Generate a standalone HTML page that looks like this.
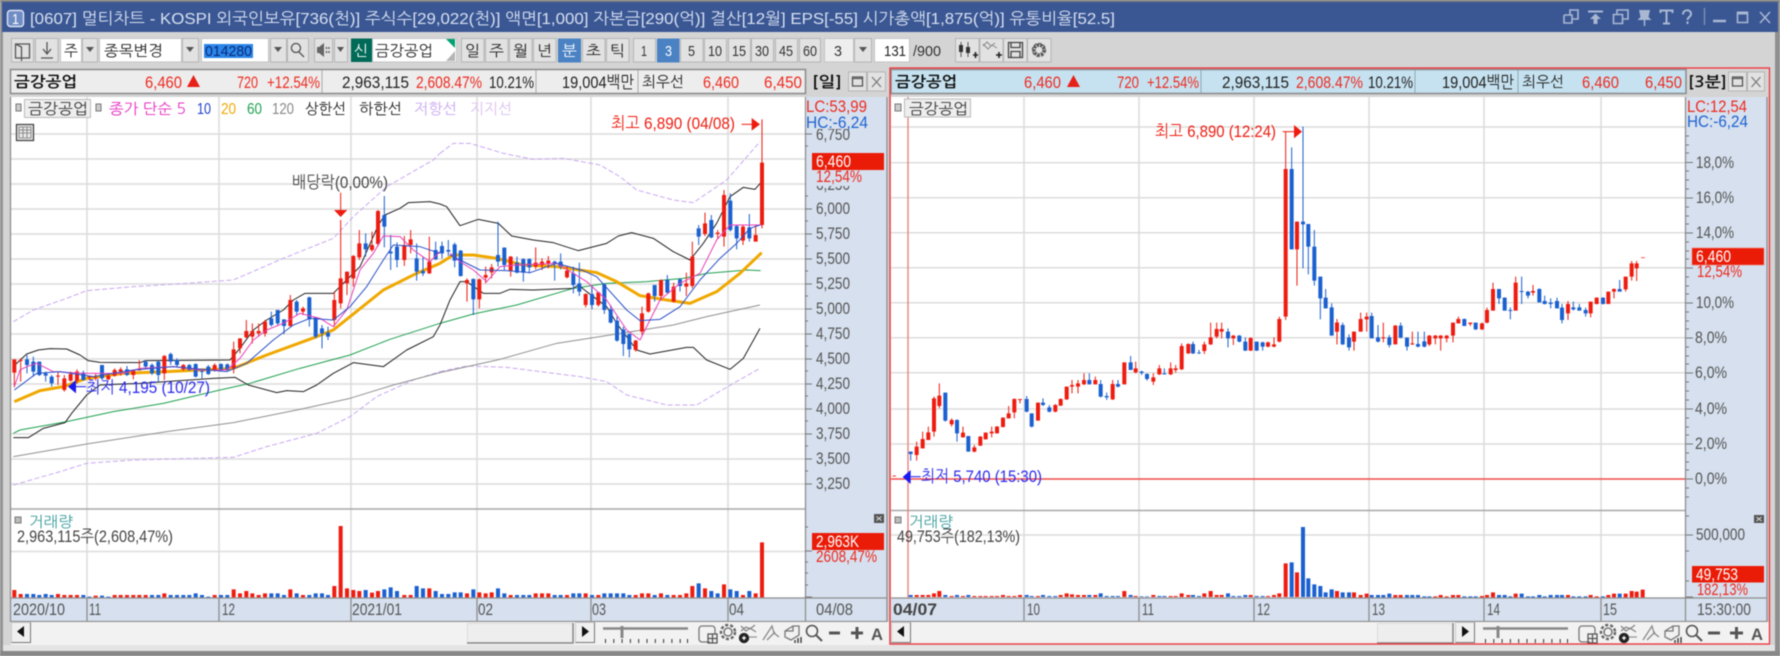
<!DOCTYPE html>
<html lang="ko"><head><meta charset="utf-8"><title>멀티차트</title>
<style>
html,body{margin:0;padding:0;width:1780px;height:656px;overflow:hidden;background:#d4d4d4}
svg{display:block;filter:blur(.45px)}
text{font-family:"Liberation Sans","NanumGothic","Noto Sans CJK KR",sans-serif;font-size:17px;fill:#333}
.k{font-family:"NanumGothic","Noto Sans CJK KR",sans-serif}
.b{font-weight:bold;fill:#111}
.r{fill:#ee2a20}.u{fill:#1e62d0}.w{fill:#fff}.a{fill:#555}
.wr,.wb,.br,.bb{fill:none}
.wr{stroke:#ee1c10;stroke-width:3}.wb{stroke:#1a60d0;stroke-width:3}
.br{stroke:#ee1c10;stroke-width:12}.bb{stroke:#1a60d0;stroke-width:12}
.g{stroke:#dcdcdc;stroke-width:1.5;fill:none}
.ln{fill:none;stroke-linejoin:round}
.btn{fill:#e2e2e2;stroke:#b5b5b5}
.ic{fill:none;stroke:#555;stroke-width:1.3}
.ti{fill:none;stroke:#a9b7d3;stroke-width:2}
</style></head><body>
<svg width="1780" height="656" viewBox="0 0 1780 656" xmlns="http://www.w3.org/2000/svg">
<!-- frame -->
<rect width="1780" height="656" fill="#d4d4d4"/>
<rect x="0" y="0" width="3" height="656" fill="#959595"/>
<rect x="1775" y="0" width="5" height="656" fill="#8f8f8f"/>
<rect x="0" y="0" width="1780" height="2" fill="#7d7d7d"/>
<rect x="2" y="2" width="1776" height="30" fill="#3a5794"/>
<rect x="3" y="645" width="1772" height="6" fill="#e4e4e4"/>
<rect x="0" y="651" width="1780" height="5" fill="#888"/>
<!-- title -->
<rect x="7.500" y="10.500" width="16" height="16" rx="3" fill="#6f8cc4" stroke="#dfe6f4" stroke-width="1.400"/>
<text x="12" y="24" textLength="7" lengthAdjust="spacingAndGlyphs" class="w" style="font-size:15px">1</text>
<text x="30" y="24" textLength="1085" lengthAdjust="spacingAndGlyphs" style="fill:#d8e0f0;font-size:16px">[0607] 멀티차트 - KOSPI 외국인보유[736(천)] 주식수[29,022(천)] 액면[1,000] 자본금[290(억)] 결산[12월] EPS[-55] 시가총액[1,875(억)] 유통비율[52.5]</text>
<g class="ti">
<path d="M1564 15h6v-5h8v9h-6M1564 15v8h8v-8h-8" stroke-width="1.600"/>
<path d="M1588 11.500h15" stroke-width="2"/><path d="M1590 19l5.500-5.500 5.500 5.500h-3.500v5h-4v-5z" fill="#a9b7d3" stroke="none"/>
<path d="M1617 15v-5h11v9h-5M1613.500 14.500h9v9h-9z" stroke-width="1.600"/>
<path d="M1639 10h11l-1.500 7 3 3h-14l3-3z" fill="#a9b7d3" stroke="none"/><path d="M1644.500 20v6" stroke-width="1.500"/>
<path d="M1660.500 13v-2.500h12v2.500M1666.500 10.500v13M1663 23.500h7"/>
<path d="M1683 14.500c0-5.500 8-5.500 8-.5 0 3-3.500 3-3.500 6M1687.500 21.500v2.500"/>
<path d="M1704.500 8v17" stroke="#8294b8" stroke-width="1.300"/>
<path d="M1713 21h13" stroke-width="2.500"/>
<path d="M1737.500 12.500h10v10h-10z" stroke-width="1.600"/><path d="M1737 13h11" stroke-width="3"/>
<path d="M1760 12l10 11M1770 12l-10 11" stroke-width="1.500"/>
</g>
<!-- toolbar -->
<g>
<rect class="btn" x="11.500" y="38.500" width="22" height="23.500"/>
<path class="ic" d="M15.500 44h14v14h-14zM15.500 44l6 3v14M15.500 58h6"/>
<rect class="btn" x="35.500" y="38.500" width="22.500" height="23.500"/>
<path class="ic" d="M47 42v11M43 49l4 5 4-5M41 58h12" stroke-width="1.600"/>
<rect x="60.500" y="38.500" width="21" height="23.500" fill="#fff" stroke="#c4c4c4"/>
<text x="64" y="56" textLength="14" lengthAdjust="spacingAndGlyphs" class="k" style="font-size:15px;fill:#222">주</text>
<rect class="btn" x="82.500" y="38.500" width="15" height="23.500"/><path d="M86 47h8l-4 5z" fill="#555"/>
<rect x="99.500" y="38.500" width="82" height="23.500" fill="#fff" stroke="#c4c4c4"/>
<text x="104" y="56" textLength="59" lengthAdjust="spacingAndGlyphs" class="k" style="font-size:15px;fill:#222">종목변경</text>
<rect class="btn" x="182.500" y="38.500" width="16" height="23.500"/><path d="M186 47h8l-4 5z" fill="#555"/>
<rect x="201.500" y="38.500" width="67" height="23.500" fill="#fff" stroke="#c4c4c4"/>
<rect x="204" y="44" width="49" height="14" fill="#2a86e8"/>
<text x="205" y="56" textLength="47" lengthAdjust="spacingAndGlyphs" style="font-size:15px;fill:#0a2a7a">014280</text>
<rect class="btn" x="270.500" y="38.500" width="16" height="23.500"/><path d="M274 47h8l-4 5z" fill="#555"/>
<rect class="btn" x="287.500" y="38.500" width="21" height="23.500"/>
<path class="ic" d="M296 43.500a4.500 4.500 0 1 1-.1 0zM299 52l5 5" stroke-width="1.600" stroke="#888"/>
<rect class="btn" x="314.500" y="38.500" width="18" height="23.500"/>
<path d="M317 47h2l5-4v14l-5-4h-2z" fill="#666"/><path class="ic" d="M326.500 47v2M326.500 51v2M329 47v2M329 51v2" stroke="#888"/>
<rect class="btn" x="334.500" y="38.500" width="13" height="23.500"/><path d="M337 47h7l-3.500 5z" fill="#555"/>
<rect x="351" y="38.500" width="21" height="23.500" fill="#006a58"/>
<text x="354" y="56" textLength="14" lengthAdjust="spacingAndGlyphs" class="k" style="font-size:15px;fill:#fff">신</text>
<rect x="372.500" y="38.500" width="84" height="23.500" fill="#fff" stroke="#c4c4c4"/>
<text x="375" y="56" textLength="58" lengthAdjust="spacingAndGlyphs" class="k" style="font-size:15px;fill:#222">금강공업</text>
<path d="M446 39h9v9z" fill="#00a070"/><path d="M455 51v10h-9z" fill="#b5b5b5"/>
</g>
<g>
<rect class="btn" x="461.500" y="38.500" width="22.500" height="23.500"/><rect class="btn" x="485.500" y="38.500" width="22.500" height="23.500"/>
<rect class="btn" x="509.500" y="38.500" width="22.500" height="23.500"/><rect class="btn" x="533.500" y="38.500" width="22.500" height="23.500"/>
<rect x="558" y="38.500" width="23" height="24" fill="#4a82c4"/><rect class="btn" x="582.500" y="38.500" width="22.500" height="23.500"/>
<rect class="btn" x="606.500" y="38.500" width="22.500" height="23.500"/>
<rect class="btn" x="633.500" y="38.500" width="22" height="23.500"/><rect x="657" y="38.500" width="22.500" height="24" fill="#4a82c4"/>
<rect class="btn" x="680.500" y="38.500" width="22.500" height="23.500"/><rect class="btn" x="704.500" y="38.500" width="22" height="23.500"/>
<rect class="btn" x="728.500" y="38.500" width="22" height="23.500"/><rect class="btn" x="751.500" y="38.500" width="22" height="23.500"/>
<rect class="btn" x="775.500" y="38.500" width="22" height="23.500"/><rect class="btn" x="799.500" y="38.500" width="21" height="23.500"/>
<text x="465" y="56" textLength="15" lengthAdjust="spacingAndGlyphs" class="k" style="font-size:15px;fill:#222">일</text>
<text x="489" y="56" textLength="15" lengthAdjust="spacingAndGlyphs" class="k" style="font-size:15px;fill:#222">주</text>
<text x="513" y="56" textLength="15" lengthAdjust="spacingAndGlyphs" class="k" style="font-size:15px;fill:#222">월</text>
<text x="537" y="56" textLength="15" lengthAdjust="spacingAndGlyphs" class="k" style="font-size:15px;fill:#222">년</text>
<text x="562" y="56" textLength="15" lengthAdjust="spacingAndGlyphs" class="k" style="font-size:15px;fill:#fff">분</text>
<text x="586" y="56" textLength="15" lengthAdjust="spacingAndGlyphs" class="k" style="font-size:15px;fill:#222">초</text>
<text x="610" y="56" textLength="15" lengthAdjust="spacingAndGlyphs" class="k" style="font-size:15px;fill:#222">틱</text>
<text x="641" y="56" textLength="6" lengthAdjust="spacingAndGlyphs" style="font-size:15px">1</text>
<text x="665" y="56" textLength="7" lengthAdjust="spacingAndGlyphs" class="w" style="font-size:15px">3</text>
<text x="688" y="56" textLength="7" lengthAdjust="spacingAndGlyphs" style="font-size:15px">5</text>
<text x="708" y="56" textLength="14" lengthAdjust="spacingAndGlyphs" style="font-size:15px">10</text>
<text x="732" y="56" textLength="14" lengthAdjust="spacingAndGlyphs" style="font-size:15px">15</text>
<text x="755" y="56" textLength="14" lengthAdjust="spacingAndGlyphs" style="font-size:15px">30</text>
<text x="779" y="56" textLength="14" lengthAdjust="spacingAndGlyphs" style="font-size:15px">45</text>
<text x="803" y="56" textLength="14" lengthAdjust="spacingAndGlyphs" style="font-size:15px">60</text>
<rect x="824.500" y="38.500" width="29" height="23.500" fill="#eee" stroke="#c4c4c4"/>
<text x="834" y="56" textLength="8" lengthAdjust="spacingAndGlyphs" style="font-size:15px">3</text>
<rect class="btn" x="854.500" y="38.500" width="17" height="23.500"/><path d="M859 47h8l-4 5z" fill="#555"/>
<rect x="874.500" y="38.500" width="35" height="23.500" fill="#fff" stroke="#c4c4c4"/>
<text x="884" y="56" textLength="22" lengthAdjust="spacingAndGlyphs" style="font-size:15px;fill:#222">131</text>
<text x="913" y="56" textLength="28" lengthAdjust="spacingAndGlyphs" style="font-size:15px">/900</text>
<rect class="btn" x="955.500" y="38.500" width="23.500" height="23.500"/>
<path d="M961 42v15M968 42v15" stroke="#555" fill="none"/><path d="M959 45h4v7h-4zM966 47h4v6h-4z" fill="#333"/><path d="M973 55h5M975.500 52v6" stroke="#222" stroke-width="1.600"/>
<rect class="btn" x="980" y="38.500" width="23" height="23.500"/>
<path d="M983 46l4-4 4 4 4-3M983 44l5 5 4-4 5 3" fill="none" stroke="#888"/><path d="M996 55h6M999 52v6" stroke="#222" stroke-width="1.600"/>
<rect class="btn" x="1003.500" y="38.500" width="23.500" height="23.500"/>
<path d="M1008.500 42.500h14v15h-14zM1011 42.500v5h9v-5M1011 57.500v-6h9v6" fill="none" stroke="#444" stroke-width="1.300"/>
<rect class="btn" x="1027.500" y="38.500" width="23.500" height="23.500"/>
<circle cx="1039" cy="50" r="5" fill="none" stroke="#555" stroke-width="3.500" stroke-dasharray="2.500 1"/><circle cx="1039" cy="50" r="6.500" fill="none" stroke="#666" stroke-width="1.500" stroke-dasharray="3 2"/>
</g>
<!-- left header -->
<rect x="10.500" y="69.500" width="795" height="24" fill="#ededed" stroke="#8a8a8a" stroke-width="1.500"/>
<path d="M322 70v23M536 70v23M638 70v23" stroke="#a8a8a8"/>
<text x="14" y="87" textLength="63" lengthAdjust="spacingAndGlyphs" class="k b" style="font-size:15px">금강공업</text>
<text x="145" y="88" textLength="37" lengthAdjust="spacingAndGlyphs" class="r">6,460</text><path d="M187 87l6.500-12 6.500 12z" fill="#e8201a"/>
<text x="237" y="88" textLength="21" lengthAdjust="spacingAndGlyphs" class="r">720</text>
<text x="267" y="88" textLength="53" lengthAdjust="spacingAndGlyphs" class="r">+12.54%</text>
<text x="342" y="88" textLength="67" lengthAdjust="spacingAndGlyphs" style="fill:#222">2,963,115</text>
<text x="416" y="88" textLength="66" lengthAdjust="spacingAndGlyphs" class="r">2,608.47%</text>
<text x="489" y="88" textLength="45" lengthAdjust="spacingAndGlyphs" style="fill:#222">10.21%</text>
<text x="562" y="88" textLength="72" lengthAdjust="spacingAndGlyphs" style="fill:#222">19,004백만</text>
<text x="642" y="87" textLength="42" lengthAdjust="spacingAndGlyphs" class="k" style="font-size:15px;fill:#222">최우선</text>
<text x="703" y="88" textLength="36" lengthAdjust="spacingAndGlyphs" class="r">6,460</text>
<text x="764" y="88" textLength="38" lengthAdjust="spacingAndGlyphs" class="r">6,450</text>
<text x="812" y="87" textLength="30" lengthAdjust="spacingAndGlyphs" class="k b" style="font-size:15px">[일]</text>
<rect class="btn" x="848.500" y="72" width="18" height="19"/><rect class="btn" x="867.500" y="72" width="18" height="19"/>
<path d="M852.500 77h10v9h-10zM852.500 78.500h10" fill="none" stroke="#555" stroke-width="1.300"/>
<path d="M872 77l9 10M881 77l-9 10" stroke="#777" stroke-width="1.200"/>
<!-- right header -->
<rect x="891" y="69.500" width="795" height="24" fill="#c6e2f0" stroke="#8a8a8a" stroke-width="1.500"/>
<path d="M1201 70v23M1415 70v23M1518 70v23" stroke="#8ea8b5"/>
<text x="895" y="87" textLength="62" lengthAdjust="spacingAndGlyphs" class="k b" style="font-size:15px">금강공업</text>
<text x="1024" y="88" textLength="37" lengthAdjust="spacingAndGlyphs" class="r">6,460</text><path d="M1067 87l6.500-12 6.500 12z" fill="#e8201a"/>
<text x="1117" y="88" textLength="22" lengthAdjust="spacingAndGlyphs" class="r">720</text>
<text x="1147" y="88" textLength="52" lengthAdjust="spacingAndGlyphs" class="r">+12.54%</text>
<text x="1222" y="88" textLength="67" lengthAdjust="spacingAndGlyphs" style="fill:#222">2,963,115</text>
<text x="1296" y="88" textLength="67" lengthAdjust="spacingAndGlyphs" class="r">2,608.47%</text>
<text x="1368" y="88" textLength="45" lengthAdjust="spacingAndGlyphs" style="fill:#222">10.21%</text>
<text x="1442" y="88" textLength="72" lengthAdjust="spacingAndGlyphs" style="fill:#222">19,004백만</text>
<text x="1522" y="87" textLength="42" lengthAdjust="spacingAndGlyphs" class="k" style="font-size:15px;fill:#222">최우선</text>
<text x="1582" y="88" textLength="37" lengthAdjust="spacingAndGlyphs" class="r">6,460</text>
<text x="1645" y="88" textLength="37" lengthAdjust="spacingAndGlyphs" class="r">6,450</text>
<text x="1688" y="87" textLength="39" lengthAdjust="spacingAndGlyphs" class="k b" style="font-size:15px">[3분]</text>
<rect class="btn" x="1728.500" y="72" width="18" height="19"/><rect class="btn" x="1747.500" y="72" width="17" height="19"/>
<path d="M1732.500 77h10v9h-10zM1732.500 78.500h10" fill="none" stroke="#555" stroke-width="1.300"/>
<path d="M1751.500 77l9 10M1760.500 77l-9 10" stroke="#777" stroke-width="1.200"/>

<!-- LEFT chart -->
<rect x="11" y="97" width="794" height="501" fill="#fff"/>
<rect x="805" y="97" width="82" height="525" fill="#d6e0ee"/>
<rect x="11" y="598" width="794" height="24" fill="#d6e0ee"/>
<path class="g" d="M11 134H805M11 159H805M11 184H805M11 209H805M11 234H805M11 259H805M11 284H805M11 309H805M11 334H805M11 359H805M11 384H805M11 409H805M11 434H805M11 459H805M11 484H805M11 551.500H805M87 97V598M219 97V598M351 97V598M477 97V598M591 97V598M728 97V598"/>
<path d="M11 509H805" stroke="#a8a8a8" stroke-width="1.500"/>
<path d="M10.500 97V622M805.500 97V622M887 97V622M11 598H887M11 621.500H887M87 598V621M219 598V621M351 598V621M477 598V621M591 598V621M728 598V621" stroke="#8e8e8e" stroke-width="1.300" fill="none"/>
<path d="M805 134h7M805 209h7M805 234h7M805 259h7M805 284h7M805 309h7M805 334h7M805 359h7M805 384h7M805 409h7M805 434h7M805 459h7M805 484h7M805 146h3M805 196h3M805 221h3M805 246h3M805 271h3M805 296h3M805 321h3M805 346h3M805 371h3M805 396h3M805 421h3M805 446h3M805 471h3M805 527h3M805 551h7M805 562h3M805 573h3M805 585h3M805 597h7" stroke="#777" fill="none"/>
<g transform="translate(0,110) scale(.33333)">
<polyline class="ln" stroke="#c9a8f2" stroke-width="3" stroke-dasharray="15 7" points="40,635 100,600 200,565 260,542 400,530 560,520 700,510 850,445 1000,385 1060,320 1160,230 1300,150 1320,130"/>
<polyline class="ln" stroke="#c9a8f2" stroke-width="3" stroke-dasharray="15 7" points="40,1125 180,1085 260,1060 400,1050 700,1042 800,1010 950,970 1050,920 1130,860 1240,810 1320,785"/>
<polyline class="ln" stroke="#909090" stroke-width="3" points="40,1040 260,1002 500,965 700,938 900,898 1050,865 1180,825 1320,788"/>
<polyline class="ln" stroke="#1fa050" stroke-width="3" points="40,970 60,960 200,935 340,905 490,880 660,840 750,820 900,775 1050,735 1170,688 1320,640"/>
<polyline class="ln" stroke="#222" stroke-width="3" points="40,983 85,983 130,955 195,938 215,910 260,855 300,825 420,820 640,805 705,802 745,825 830,848 860,842 910,845 950,825 1000,790 1060,758 1150,770 1220,720 1300,680 1320,645"/>
<polyline class="ln" stroke="#222" stroke-width="3" points="45,765 80,732 115,720 150,716 200,717 240,735 265,752 300,757 420,758 435,752 690,750 720,715 760,660 800,630 850,600 880,570 915,550 1000,550 1020,530 1080,470 1135,345 1155,315 1200,295 1225,278 1290,275 1320,282"/>
<polyline class="ln" stroke="#f0a800" stroke-width="9" points="43,875 120,842 190,830 260,805 370,790 500,785 700,775 800,735 950,680 1000,660 1050,620 1150,540 1250,490 1320,460"/>
<path class="wr" d="M43 748V832M62 745V815M174 785V825M193 795V845M212 785V815M231 778V820M268 797V810M287 792V812M325 790V810M344 775V800M362 772V797M400 780V808M418 750V782M493 735V810M550 762V782M644 760V785M701 695V790M720 685V730M739 630V685M757 640V700M776 640V680M795 630V680M871 555V650M909 590V615M1003 545V650M1022 330V595M1041 485V555M1060 435V530M1078 360V450M1116 365V425M1134 300V410M1213 378V468M1232 360V430M1288 380V492"/>
<path class="br" d="M43 748V788M62 750V753M174 797V800M193 805V840M212 792V812M231 785V812M268 800V803M287 802V805M325 797V808M344 780V797M362 778V785M400 782V795M418 778V781M493 738V790M550 765V778M644 765V780M701 718V775M720 685V715M739 663V682M757 663V680M776 663V670M795 635V670M871 570V648M909 595V605M1003 570V630M1022 505V580M1041 485V520M1060 438V505M1078 400V442M1116 405V420M1134 303V402M1213 405V450M1232 388V405M1288 455V490"/>
<path class="wb" d="M81 735V790M100 740V800M118 755V798M137 785V815M155 795V830M250 782V812M306 765V810M381 768V798M437 750V778M456 760V795M475 752V815M512 728V765M531 745V770M568 762V782M587 760V802M606 782V805M625 765V795M663 760V785M682 760V783M814 605V650M833 600V645M852 628V672M890 570V615M928 560V650M947 622V685M966 645V715M984 650V690M1097 370V440M1153 258V412M1172 375V480M1191 397V472M1250 400V512M1269 440V498M1307 395V450"/>
<path class="bb" d="M81 748V765M100 755V785M118 755V795M137 790V797M155 800V820M250 788V810M306 765V805M381 778V795M437 755V770M456 765V790M475 755V795M512 732V755M531 750V765M568 765V780M587 762V800M606 783V786M625 770V792M663 762V780M682 763V780M814 625V645M833 600V640M852 628V648M890 575V605M928 562V628M947 622V680M966 655V670M984 668V680M1097 400V418M1153 315V350M1172 425V430M1191 410V450M1250 445V485M1269 483V490M1307 420V448"/>
<polyline class="ln" stroke="#e83fb8" stroke-width="3" points="43,830 60,780 80,770 110,760 160,785 250,790 370,790 420,775 520,770 600,780 680,780 720,745 760,690 800,660 850,640 900,610 960,625 1000,650 1040,600 1080,480 1120,430 1150,378 1200,380 1240,420 1290,455 1320,425"/>
<polyline class="ln" stroke="#2a4fc8" stroke-width="3" points="43,840 110,790 180,785 280,800 400,780 520,770 680,785 740,760 820,690 880,645 930,625 1000,630 1050,590 1100,530 1150,450 1180,405 1260,410 1320,430"/>
<path d="M1022 248V305" stroke="#ee1c10" stroke-width="3"/><path d="M1002 300h40l-20 21z" fill="#ee1c10"/>
<path d="M258 830H228" stroke="#1a1af0" stroke-width="3"/><path d="M228 810v40l-24-20z" fill="#1a1af0"/>
</g>
<g transform="translate(440,110) scale(.33333)">
<polyline class="ln" stroke="#c9a8f2" stroke-width="3" stroke-dasharray="15 7" points="0,130 40,100 90,100 190,130 280,148 370,145 480,165 540,200 590,240 700,270 760,278 860,210 960,95"/>
<polyline class="ln" stroke="#c9a8f2" stroke-width="3" stroke-dasharray="15 7" points="0,785 80,768 200,772 420,800 500,815 560,855 680,885 770,885 880,820 960,775"/>
<polyline class="ln" stroke="#909090" stroke-width="3" points="0,788 180,748 350,700 530,672 700,645 800,620 960,585"/>
<polyline class="ln" stroke="#1fa050" stroke-width="3" points="0,640 100,612 230,585 400,535 500,520 620,515 730,505 800,490 920,480 962,482"/>
<polyline class="ln" stroke="#222" stroke-width="3" points="0,645 30,570 60,515 80,515 130,550 180,550 210,538 280,540 400,535 415,525 440,545 500,590 530,640 590,720 630,732 740,712 760,712 800,750 870,778 910,745 960,655"/>
<polyline class="ln" stroke="#222" stroke-width="3" points="0,282 20,290 60,347 115,328 175,340 215,378 280,390 340,398 415,422 500,400 535,378 575,368 640,385 700,425 750,450 790,400 830,340 870,260 910,232 945,238 965,215"/>
<polyline class="ln" stroke="#f0a800" stroke-width="9" points="0,460 40,435 100,435 170,445 250,465 350,470 470,488 530,515 600,557 680,570 750,580 830,545 900,490 965,428"/>
<path class="wr" d="M81 505V575M118 505V595M137 470V520M155 462V505M212 438V500M287 412V478M306 445V480M325 438V475M381 468V505M437 550V592M475 545V590M587 690V725M606 590V675M625 548V608M663 508V572M701 518V578M739 488V558M757 395V535M795 308V378M833 360V385M852 240V410M909 345V405M947 345V395M966 28V355"/>
<path class="br" d="M81 510V520M118 508V568M137 495V503M155 472V487M212 440V482M287 458V470M306 455V465M325 452V460M381 482V502M437 552V585M475 547V585M587 692V720M606 610V665M625 550V605M663 510V558M701 530V575M739 520V530M757 440V528M795 340V372M833 368V372M852 255V380M909 350V392M947 375V395M966 158V345"/>
<path class="wb" d="M6 395V445M25 390V438M44 398V472M62 420V500M100 505V615M174 335V470M193 412V480M231 440V490M250 445V515M268 445V490M344 452V512M362 430V478M400 470V550M418 458V558M456 525V598M493 520V612M512 585V640M531 620V695M550 650V738M568 670V742M644 525V575M682 495V550M720 505V545M776 345V405M814 315V385M871 250V365M890 345V418M928 312V395"/>
<path class="bb" d="M6 408V430M25 420V425M44 403V452M62 422V498M100 507V568M174 435V455M193 413V465M231 458V488M250 447V488M268 447V472M344 455V462M362 455V470M400 490V525M418 520V545M456 552V585M493 523V600M512 598V638M531 632V692M550 658V702M568 672V718M644 525V558M682 510V548M720 508V528M776 355V380M814 330V382M871 272V360M890 348V385M928 352V385"/>
<polyline class="ln" stroke="#e83fb8" stroke-width="3" points="30,430 60,455 100,480 140,515 180,470 230,465 350,460 400,490 440,515 500,570 560,660 600,690 660,570 720,520 780,490 830,390 870,345 930,345 965,345"/>
<polyline class="ln" stroke="#2a4fc8" stroke-width="3" points="30,435 90,465 120,480 200,482 270,488 350,460 430,482 470,500 560,600 600,632 660,628 720,590 780,510 840,445 890,400 930,355 960,345"/>
<path d="M905 43h32" stroke="#ee1c10" stroke-width="3"/><path d="M935 24l25 19-25 19z" fill="#ee1c10"/>
</g>
<g transform="translate(0,370) scale(.33333)">
<path class="br" d="M43 660V682M62 672V682M174 672V682M193 675V682M212 675V682M231 675V682M287 677V682M344 675V682M362 675V682M381 675V682M400 675V682M418 675V682M437 675V682M493 670V682M644 675V682M701 658V682M720 670V682M739 663V682M757 670V682M776 675V682M795 670V682M871 658V682M909 675V682M1003 648V682M1022 468V682M1041 655V682M1060 660V682M1078 663V682M1116 668V682M1134 663V682M1213 675V682M1232 675V682M1288 655V682"/>
<path class="bb" d="M81 672V682M100 672V682M118 675V682M137 672V682M155 675V682M250 675V682M268 680V682M306 677V682M325 680V682M456 675V682M475 675V682M512 675V682M531 675V682M550 675V682M568 675V682M587 670V682M606 675V682M625 680V682M663 675V682M682 675V682M814 670V682M833 670V682M852 675V682M890 670V682M928 675V682M947 670V682M966 670V682M984 675V682M1097 660V682M1153 658V682M1172 652V682M1191 663V682M1250 648V682M1269 655V682M1307 663V682"/>
</g>
<g transform="translate(440,490) scale(.33333)">
<path class="br" d="M81 310V322M118 307V322M137 310V322M155 307V322M212 315V322M287 310V322M306 310V322M325 310V322M381 315V322M437 310V322M475 315V322M587 315V322M606 310V322M625 310V322M663 310V322M701 315V322M720 315V322M739 310V322M757 288V322M795 295V322M852 283V322M909 315V322M947 310V322M966 157V322"/>
<path class="bb" d="M6 312V322M25 312V322M44 307V322M62 307V322M100 298V322M174 295V322M193 310V322M231 315V322M250 315V322M268 315V322M344 315V322M362 315V322M400 310V322M418 310V322M456 315V322M493 310V322M512 310V322M531 310V322M550 310V322M568 315V322M644 315V322M682 315V322M776 280V322M814 303V322M833 310V322M871 298V322M890 303V322M928 303V322"/>
</g>
<!-- left texts -->
<rect x="16" y="104" width="5" height="7" fill="#ccc" stroke="#777"/>
<rect x="24.500" y="99.500" width="66" height="18" fill="#eee" stroke="#bbb"/>
<text x="28" y="114" textLength="60" lengthAdjust="spacingAndGlyphs" class="k" style="font-size:15px;fill:#333">금강공업</text>
<rect x="96" y="104" width="5" height="7" fill="#ccc" stroke="#777"/>
<text x="109" y="114" textLength="77" lengthAdjust="spacingAndGlyphs" class="k" style="font-size:15px;fill:#e62cc0">종가 단순 5</text>
<text x="197" y="114" textLength="14" lengthAdjust="spacingAndGlyphs" style="font-size:16px;fill:#2040c8">10</text>
<text x="221" y="114" textLength="15" lengthAdjust="spacingAndGlyphs" style="font-size:16px;fill:#f0a800">20</text>
<text x="247" y="114" textLength="15" lengthAdjust="spacingAndGlyphs" style="font-size:16px;fill:#1fa050">60</text>
<text x="272" y="114" textLength="22" lengthAdjust="spacingAndGlyphs" style="font-size:16px;fill:#888">120</text>
<text x="305" y="114" textLength="41" lengthAdjust="spacingAndGlyphs" class="k" style="font-size:15px;fill:#222">상한선</text>
<text x="359" y="114" textLength="43" lengthAdjust="spacingAndGlyphs" class="k" style="font-size:15px;fill:#222">하한선</text>
<text x="414" y="114" textLength="43" lengthAdjust="spacingAndGlyphs" class="k" style="font-size:15px;fill:#c9a8f2">저항선</text>
<text x="470" y="114" textLength="42" lengthAdjust="spacingAndGlyphs" class="k" style="font-size:15px;fill:#dcc0f0">지지선</text>
<rect x="16.500" y="124.500" width="17" height="16" fill="#e8e8e8" stroke="#444" stroke-width="1.300"/>
<path d="M19 127h12v11h-12zM19 130h12M19 133h12M23 127v11M27 127v11" fill="none" stroke="#777" stroke-width=".8"/>
<text x="292" y="188" textLength="96" lengthAdjust="spacingAndGlyphs" style="fill:#444">배당락(0,00%)</text>
<text x="611" y="129" textLength="124" lengthAdjust="spacingAndGlyphs" style="fill:#ee1c10">최고 6,890 (04/08)</text>
<text x="86" y="393" textLength="124" lengthAdjust="spacingAndGlyphs" style="fill:#2a2af0">최저 4,195 (10/27)</text>
<text x="816" y="140" textLength="34" lengthAdjust="spacingAndGlyphs" class="a">6,750</text>
<text x="816" y="190" textLength="34" lengthAdjust="spacingAndGlyphs" class="a">6,250</text>
<text x="816" y="214" textLength="34" lengthAdjust="spacingAndGlyphs" class="a">6,000</text>
<text x="816" y="239" textLength="34" lengthAdjust="spacingAndGlyphs" class="a">5,750</text>
<text x="816" y="264" textLength="34" lengthAdjust="spacingAndGlyphs" class="a">5,500</text>
<text x="816" y="289" textLength="34" lengthAdjust="spacingAndGlyphs" class="a">5,250</text>
<text x="816" y="314" textLength="34" lengthAdjust="spacingAndGlyphs" class="a">5,000</text>
<text x="816" y="339" textLength="34" lengthAdjust="spacingAndGlyphs" class="a">4,750</text>
<text x="816" y="364" textLength="34" lengthAdjust="spacingAndGlyphs" class="a">4,500</text>
<text x="816" y="389" textLength="34" lengthAdjust="spacingAndGlyphs" class="a">4,250</text>
<text x="816" y="414" textLength="34" lengthAdjust="spacingAndGlyphs" class="a">4,000</text>
<text x="816" y="439" textLength="34" lengthAdjust="spacingAndGlyphs" class="a">3,750</text>
<text x="816" y="464" textLength="34" lengthAdjust="spacingAndGlyphs" class="a">3,500</text>
<text x="816" y="489" textLength="34" lengthAdjust="spacingAndGlyphs" class="a">3,250</text>
<rect x="806" y="97" width="80" height="32" fill="#d6e0ee"/>
<rect x="812" y="170" width="72" height="16" fill="#d6e0ee"/>
<text x="806" y="112" textLength="61" lengthAdjust="spacingAndGlyphs" class="r">LC:53,99</text>
<text x="806" y="128" textLength="62" lengthAdjust="spacingAndGlyphs" class="u">HC:-6,24</text>
<rect x="812" y="153" width="72" height="17" fill="#ea1c08"/>
<text x="816" y="167" textLength="35" lengthAdjust="spacingAndGlyphs" class="w">6,460</text>
<text x="816" y="182" textLength="46" lengthAdjust="spacingAndGlyphs" class="r">12,54%</text>
<rect x="874" y="514" width="10" height="9" fill="#555"/><path d="M876.500 516.500l5 4M881.500 516.500l-5 4" stroke="#ddd"/>
<rect x="812" y="533" width="72" height="17" fill="#ea1c08"/>
<text x="816" y="547" textLength="43" lengthAdjust="spacingAndGlyphs" class="w">2,963K</text>
<text x="816" y="562" textLength="61" lengthAdjust="spacingAndGlyphs" class="r">2608,47%</text>
<rect x="15" y="517" width="6" height="6" fill="#bbb" stroke="#777"/>
<text x="29" y="527" textLength="44" lengthAdjust="spacingAndGlyphs" class="k" style="font-size:15px;fill:#3f9e9e">거래량</text>
<text x="17" y="542" textLength="156" lengthAdjust="spacingAndGlyphs" style="fill:#444">2,963,115주(2,608,47%)</text>
<text x="13" y="615" textLength="52" lengthAdjust="spacingAndGlyphs" class="a">2020/10</text>
<text x="89" y="615" textLength="12" lengthAdjust="spacingAndGlyphs" class="a">11</text>
<text x="222" y="615" textLength="13" lengthAdjust="spacingAndGlyphs" class="a">12</text>
<text x="352" y="615" textLength="50" lengthAdjust="spacingAndGlyphs" class="a">2021/01</text>
<text x="478" y="615" textLength="15" lengthAdjust="spacingAndGlyphs" class="a">02</text>
<text x="592" y="615" textLength="14" lengthAdjust="spacingAndGlyphs" class="a">03</text>
<text x="729" y="615" textLength="15" lengthAdjust="spacingAndGlyphs" class="a">04</text>
<text x="816" y="615" textLength="37" lengthAdjust="spacingAndGlyphs" class="a">04/08</text>
<!-- left scrollbar -->
<rect x="11" y="622" width="878" height="23" fill="#f2f2f2"/>
<rect x="11.500" y="622.500" width="19" height="20" fill="#f0f0f0" stroke="#ccc"/><path d="M30.500 622.500v20h-19" stroke="#777" fill="none"/><path d="M24 626v11l-7-5.500z" fill="#111"/>
<rect x="467.500" y="623.500" width="106" height="19" fill="#eee" stroke="#ddd"/><path d="M467 643h106v-20" stroke="#888" fill="none" stroke-width="1.500"/>
<rect x="575.500" y="622.500" width="19" height="20" fill="#f0f0f0" stroke="#ccc"/><path d="M594.500 622.500v20h-19" stroke="#777" fill="none"/><path d="M582 626v11l7-5.500z" fill="#111"/>
<path d="M603 628.500h85" stroke="#888" stroke-width="2.500"/><path d="M622 626v12" stroke="#888" stroke-width="3"/>
<path d="M605.500 639v4M613.800 639v4M622.100 639v4M630.400 639v4M638.700 639v4M647 639v4M655.300 639v4M663.600 639v4M671.900 639v4M680.200 639v4M687.500 639v4" stroke="#333"/>
<g class="ic" stroke="#777">
<path d="M710 642h-8a3 3 0 0 1-3-3v-10a3 3 0 0 1 3-3h10a3 3 0 0 1 3 3v5" stroke="#777"/><path d="M708 634h9v9h-9zM708 638.500h9M712.500 634v9" stroke="#555"/>
<circle cx="728" cy="632" r="4" stroke="#666"/><circle cx="728" cy="632" r="7" stroke="#666" stroke-width="2.500" stroke-dasharray="3 2"/>
<path d="M741 631l5-4 4 2 5-4M741 626l5 5 4-3 6 4" stroke="#888"/><circle cx="744" cy="638" r="4.500" fill="#222" stroke="#222"/><path d="M742 638h4M744 636v4" stroke="#fff"/><path d="M749 637h8" stroke="#999"/>
<path d="M763 640l9-14 2 7 5 4M767 640l8-8" stroke="#888"/>
<path d="M785 631l8-5h6v9l-8 5-6-3zM793 626v5l-8 0" stroke="#777"/><path d="M795 640v3M798 638v5M801 637v6" stroke="#444" stroke-width="1.500"/>
<circle cx="812" cy="631" r="5.500" stroke="#555" stroke-width="1.600"/><path d="M816 635l6 6" stroke="#555" stroke-width="2"/>
</g>
<path d="M829 633h11M851 633h12M857 627v12" stroke="#555" stroke-width="3" fill="none"/>
<text x="871" y="640" textLength="12" lengthAdjust="spacingAndGlyphs" style="font-weight:bold;fill:#555;font-size:17px">A</text>

<!-- RIGHT chart -->
<rect x="891" y="97" width="794" height="501" fill="#fff"/>
<rect x="1685" y="97" width="82" height="525" fill="#d6e0ee"/>
<rect x="891" y="598" width="794" height="24" fill="#d6e0ee"/>
<path class="g" d="M891 127H1685M891 162.700H1685M891 197.700H1685M891 232.700H1685M891 267.700H1685M891 302.700H1685M891 337.700H1685M891 372.700H1685M891 409H1685M891 444H1685M891 535H1685M1024 97V598M1139 97V598M1254 97V598M1369 97V598M1484 97V598M1601 97V598"/>
<path d="M891 510.500H1685" stroke="#a8a8a8" stroke-width="1.500"/>
<path d="M1685.500 97V622M1767 97V622M891 598H1767M891 621.500H1767M1024 598V621M1139 598V621M1254 598V621M1369 598V621M1484 598V621M1601 598V621" stroke="#8e8e8e" stroke-width="1.300" fill="none"/>
<path d="M908 97V598" stroke="#ec7a7a" stroke-width="1.300"/>
<path d="M891 479H1685" stroke="#f04a4a" stroke-width="1.500"/>
<path d="M1686 162.500h7M1686 198h7M1686 233h7M1686 268h7M1686 303h7M1686 338h7M1686 373h7M1686 409h7M1686 444h7M1686 479h7M1686 136h3M1686 145h3M1686 153h3M1686 171h3M1686 180h3M1686 189h3M1686 207h3M1686 216h3M1686 224h3M1686 242h3M1686 251h3M1686 259h3M1686 277h3M1686 286h3M1686 294h3M1686 312h3M1686 321h3M1686 329h3M1686 347h3M1686 356h3M1686 364h3M1686 382h3M1686 391h3M1686 400h3M1686 418h3M1686 427h3M1686 435h3M1686 453h3M1686 462h3M1686 470h3M1686 488h3M1686 497h3M1686 516h3M1686 535h7M1686 551h3M1686 597h7M1686 581h3" stroke="#777" fill="none"/>
<g transform="translate(890,100) scale(.33333)">
<path class="wr" d="M80 1025V1082M98 995V1045M115 980V1020M132 890V1010M148 850V925M185 955V980M219 980V1012M253 1035V1057M271 1008V1038M287 997V1018M305 980V1012M321 978V1000M339 952V982M356 918V955M373 895V955M390 897V910M444 908V962M496 912V937M512 895V918M530 860V900M546 840V880M564 840V880M582 820V855M616 830V853M668 840V900M703 787V853M737 785V820M790 820V855M808 795V825M842 787V825M857 795V818M875 730V810M895 730V762M943 725V762M962 668V735M980 668V715M995 668V715M1030 705V735M1082 712V753M1134 725V742M1152 712V742M1168 650V727M1187 95V660M1221 365V557M1341 657V733"/>
<path class="br" d="M80 1040V1065M98 1017V1045M115 997V1020M132 895V995M148 887V918M185 960V973M219 998V1012M253 1042V1055M271 1010V1037M287 998V1018M305 995V1000M321 980V1000M339 953V981M356 940V955M373 897V937M390 897V900M444 908V962M496 915V935M512 897V917M530 860V898M546 855V860M564 850V860M582 840V853M616 840V853M668 852V898M703 787V853M737 805V817M790 832V845M808 805V823M842 805V823M857 805V810M875 738V808M895 732V760M943 733V753M962 712V733M980 687V710M995 687V695M1030 707V715M1082 714V752M1134 727V740M1152 733V740M1168 657V725M1187 207V650M1221 365V448M1341 668V695"/>
<path class="wb" d="M62 1055V1082M166 878V965M201 958V1025M235 1008V1055M410 888V937M425 940V982M459 895V918M478 915V937M598 820V853M632 840V892M650 878V900M684 840V862M722 768V810M755 812V825M771 820V842M823 805V823M909 725V762M927 750V762M1014 685V742M1048 705V727M1066 712V753M1100 725V753M1118 725V752M1205 142V448M1239 80V505M1255 372V523M1273 390V557M1291 530V658M1307 567V625M1325 610V707"/>
<path class="bb" d="M62 1055V1062M166 878V962M201 960V1000M235 1008V1055M410 897V935M425 940V980M459 908V915M478 922V935M598 840V853M632 852V890M650 888V892M684 852V860M722 787V810M755 815V819M771 822V837M823 820V823M909 732V760M927 758V760M1014 695V715M1048 707V725M1066 725V752M1100 725V752M1118 727V740M1205 207V448M1239 365V373M1255 372V440M1273 440V542M1291 530V595M1307 593V625M1325 622V707"/>
<path d="M1178 95H1212" stroke="#ee1c10" stroke-width="3"/><path d="M1212 75l24 20-24 20z" fill="#ee1c10"/>
<path d="M92 1130H62" stroke="#1a1af0" stroke-width="3"/><path d="M62 1110v42l-24-21z" fill="#1a1af0"/>
<path d="M8 1128h10" stroke="#ee3030" stroke-width="3"/>
</g>
<g transform="translate(1330,100) scale(.33333)">
<path class="wr" d="M21 657V733M72 695V752M92 638V695M110 638V695M160 668V727M196 675V733M247 695V735M298 705V738M316 705V733M332 705V752M350 705V727M369 668V727M385 650V670M421 668V678M456 668V690M471 623V670M489 548V632M557 530V632M609 555V587M714 603V660M782 605V652M800 592V613M835 575V612M852 565V595M887 530V575M905 483V542M920 483V543"/>
<path class="br" d="M21 668V695M72 695V725M92 657V695M110 650V658M160 712V715M196 677V733M247 730V733M298 707V733M316 707V715M332 707V715M350 707V715M369 668V707M385 657V670M421 668V672M456 670V688M471 630V668M489 567V632M557 548V632M609 573V578M714 612V640M782 605V640M800 593V612M835 575V612M852 567V575M887 530V568M905 490V530M920 490V505"/>
<path class="wb" d="M38 668V735M57 703V752M125 638V715M144 675V727M178 705V742M212 668V715M231 712V752M264 695V742M283 695V742M403 656V678M437 668V690M507 567V612M524 592V632M541 622V658M575 530V612M594 573V595M628 565V607M644 587V613M662 595V625M681 593V625M696 612V670M730 605V632M748 612V632M767 623V650M819 592V613M869 540V575"/>
<path class="bb" d="M38 675V733M57 712V742M125 648V715M144 712V725M178 712V735M212 677V713M231 713V740M264 732V740M283 724V740M403 657V678M437 668V688M507 567V595M524 593V632M541 630V633M575 573V576M594 575V587M628 567V607M644 603V612M662 608V612M681 603V625M696 623V660M730 622V628M748 622V632M767 630V640M819 593V612M869 567V575"/>
<path d="M933 473h12" stroke="#f06060" stroke-width="3"/>
</g>
<g transform="translate(890,380) scale(.33333)">
<path class="br" d="M80 645V651M98 645V651M115 645V651M132 640V651M148 633V651M185 648V651M219 648V651M253 648V651M271 648V651M287 648V651M305 648V651M321 648V651M339 645V651M356 648V651M373 648V651M390 645V651M444 648V651M512 645V651M530 640V651M546 643V651M564 645V651M582 645V651M616 645V651M703 633V651M737 648V651M790 645V651M842 648V651M857 648V651M875 640V651M895 645V651M943 640V651M962 633V651M980 645V651M995 645V651M1082 645V651M1134 648V651M1152 645V651M1168 640V651M1187 550V651M1221 577V651M1341 633V651"/>
<path class="bb" d="M62 645V651M166 645V651M201 645V651M235 645V651M410 645V651M425 648V651M459 645V651M478 648V651M496 648V651M598 645V651M632 640V651M650 648V651M668 648V651M684 648V651M722 645V651M755 649V651M771 649V651M808 648V651M823 648V651M909 645V651M927 648V651M1014 640V651M1030 648V651M1048 648V651M1066 645V651M1100 648V651M1118 648V651M1205 547V651M1239 441V651M1255 595V651M1273 613V651M1291 618V651M1307 637V651M1325 628V651"/>
</g>
<g transform="translate(1330,490) scale(.33333)">
<path class="br" d="M21 303V322M72 307V322M92 315V322M110 311V322M196 315V322M212 315V322M316 319V322M332 315V322M350 319V322M369 315V322M385 315V322M456 318V322M471 315V322M489 307V322M557 311V322M714 315V322M782 315V322M800 319V322M835 315V322M852 311V322M887 311V322M905 303V322M920 305V322M938 299V322"/>
<path class="bb" d="M5 300V322M38 307V322M57 307V322M125 315V322M144 315V322M160 315V322M178 311V322M231 315V322M247 315V322M264 315V322M283 319V322M298 319V322M403 319V322M421 319V322M437 319V322M507 315V322M524 315V322M541 319V322M575 311V322M594 319V322M609 319V322M628 315V322M644 319V322M662 315V322M681 315V322M696 315V322M730 319V322M748 319V322M767 319V322M819 319V322M869 311V322"/>
</g>
<!-- right texts -->
<rect x="895" y="104" width="6" height="7" fill="#ccc" stroke="#777"/>
<rect x="904.500" y="99" width="66" height="18" fill="#eee" stroke="#bbb"/>
<text x="909" y="114" textLength="59" lengthAdjust="spacingAndGlyphs" class="k" style="font-size:15px;fill:#333">금강공업</text>
<text x="1155" y="137" textLength="121" lengthAdjust="spacingAndGlyphs" style="fill:#ee1c10">최고 6,890 (12:24)</text>
<text x="921" y="482" textLength="121" lengthAdjust="spacingAndGlyphs" style="fill:#2a2af0">최저 5,740 (15:30)</text>
<text x="1696" y="168" textLength="38" lengthAdjust="spacingAndGlyphs" class="a">18,0%</text>
<text x="1696" y="203" textLength="38" lengthAdjust="spacingAndGlyphs" class="a">16,0%</text>
<text x="1696" y="238" textLength="38" lengthAdjust="spacingAndGlyphs" class="a">14,0%</text>
<text x="1696" y="308" textLength="38" lengthAdjust="spacingAndGlyphs" class="a">10,0%</text>
<text x="1695" y="343" textLength="32" lengthAdjust="spacingAndGlyphs" class="a">8,0%</text>
<text x="1695" y="378" textLength="32" lengthAdjust="spacingAndGlyphs" class="a">6,0%</text>
<text x="1695" y="414" textLength="32" lengthAdjust="spacingAndGlyphs" class="a">4,0%</text>
<text x="1695" y="449" textLength="32" lengthAdjust="spacingAndGlyphs" class="a">2,0%</text>
<text x="1695" y="484" textLength="32" lengthAdjust="spacingAndGlyphs" class="a">0,0%</text>
<text x="1696" y="540" textLength="49" lengthAdjust="spacingAndGlyphs" class="a">500,000</text>
<text x="1687" y="112" textLength="60" lengthAdjust="spacingAndGlyphs" class="r">LC:12,54</text>
<text x="1687" y="127" textLength="61" lengthAdjust="spacingAndGlyphs" class="u">HC:-6,24</text>
<rect x="1692" y="248" width="72" height="17" fill="#ea1c08" stroke="#f08070" stroke-width=".6"/>
<text x="1696" y="262" textLength="35" lengthAdjust="spacingAndGlyphs" class="w">6,460</text>
<text x="1697" y="277" textLength="45" lengthAdjust="spacingAndGlyphs" class="r">12,54%</text>
<rect x="1754" y="515" width="10" height="8" fill="#555"/><path d="M1756.500 517l5 4M1761.500 517l-5 4" stroke="#ddd"/>
<rect x="1692" y="566" width="72" height="16.500" fill="#ea1c08"/>
<text x="1696" y="580" textLength="42" lengthAdjust="spacingAndGlyphs" class="w">49,753</text>
<text x="1697" y="595" textLength="51" lengthAdjust="spacingAndGlyphs" class="r">182,13%</text>
<rect x="895" y="517" width="6" height="6" fill="#bbb" stroke="#777"/>
<text x="909" y="527" textLength="44" lengthAdjust="spacingAndGlyphs" class="k" style="font-size:15px;fill:#3f9e9e">거래량</text>
<text x="897" y="542" textLength="123" lengthAdjust="spacingAndGlyphs" style="fill:#444">49,753주(182,13%)</text>
<text x="893" y="615" textLength="44" lengthAdjust="spacingAndGlyphs" style="font-weight:bold;fill:#444">04/07</text>
<text x="1027" y="615" textLength="13" lengthAdjust="spacingAndGlyphs" class="a">10</text>
<text x="1142" y="615" textLength="12" lengthAdjust="spacingAndGlyphs" class="a">11</text>
<text x="1257" y="615" textLength="13" lengthAdjust="spacingAndGlyphs" class="a">12</text>
<text x="1372" y="615" textLength="13" lengthAdjust="spacingAndGlyphs" class="a">13</text>
<text x="1487" y="615" textLength="13" lengthAdjust="spacingAndGlyphs" class="a">14</text>
<text x="1603" y="615" textLength="14" lengthAdjust="spacingAndGlyphs" class="a">15</text>
<text x="1697" y="615" textLength="54" lengthAdjust="spacingAndGlyphs" class="a">15:30:00</text>
<!-- right scrollbar -->
<rect x="891" y="622" width="878" height="22" fill="#f2f2f2"/>
<rect x="891.500" y="622.500" width="19" height="20" fill="#f0f0f0" stroke="#ccc"/><path d="M910.500 622.500v20h-19" stroke="#777" fill="none"/><path d="M904 626v11l-7-5.500z" fill="#111"/>
<rect x="1377.500" y="623.500" width="75" height="19" fill="#eee" stroke="#ddd"/><path d="M1377 643h76v-20" stroke="#888" fill="none" stroke-width="1.500"/>
<rect x="1455.500" y="622.500" width="19" height="20" fill="#f0f0f0" stroke="#ccc"/><path d="M1474.500 622.500v20h-19" stroke="#777" fill="none"/><path d="M1462 626v11l7-5.500z" fill="#111"/>
<path d="M1483 628.500h85" stroke="#888" stroke-width="2.500"/><path d="M1498 626v12" stroke="#888" stroke-width="3"/>
<path d="M1485.500 639v4M1493.800 639v4M1502.100 639v4M1510.400 639v4M1518.700 639v4M1527 639v4M1535.300 639v4M1543.600 639v4M1551.900 639v4M1560.200 639v4M1567.500 639v4" stroke="#333"/>
<g class="ic" transform="translate(880,0)">
<path d="M710 642h-8a3 3 0 0 1-3-3v-10a3 3 0 0 1 3-3h10a3 3 0 0 1 3 3v5" stroke="#777"/><path d="M708 634h9v9h-9zM708 638.500h9M712.500 634v9" stroke="#555"/>
<circle cx="728" cy="632" r="4" stroke="#666"/><circle cx="728" cy="632" r="7" stroke="#666" stroke-width="2.500" stroke-dasharray="3 2"/>
<path d="M741 631l5-4 4 2 5-4M741 626l5 5 4-3 6 4" stroke="#888"/><circle cx="744" cy="638" r="4.500" fill="#222" stroke="#222"/><path d="M742 638h4M744 636v4" stroke="#fff"/><path d="M749 637h8" stroke="#999"/>
<path d="M763 640l9-14 2 7 5 4M767 640l8-8" stroke="#888"/>
<path d="M785 631l8-5h6v9l-8 5-6-3zM793 626v5l-8 0" stroke="#777"/><path d="M795 640v3M798 638v5M801 637v6" stroke="#444" stroke-width="1.500"/>
<circle cx="812" cy="631" r="5.500" stroke="#555" stroke-width="1.600"/><path d="M816 635l6 6" stroke="#555" stroke-width="2"/>
</g>
<path d="M1708 633h12M1730 633h13M1736.500 627v12" stroke="#555" stroke-width="3" fill="none"/>
<text x="1751" y="640" textLength="12" lengthAdjust="spacingAndGlyphs" style="font-weight:bold;fill:#555;font-size:17px">A</text>
<!-- selection border -->
<rect x="890" y="68" width="879.500" height="576" fill="none" stroke="#f03038" stroke-width="1.300"/>
</svg>
</body></html>
